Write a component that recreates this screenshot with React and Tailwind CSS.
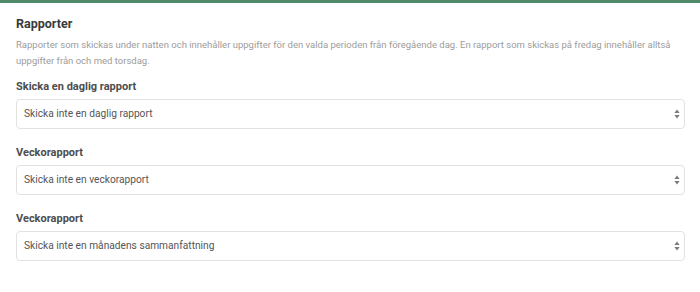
import React from "react";

function Arrows() {
  return (
    <svg width="6" height="10" viewBox="0 0 6 10" className="shrink-0">
      <path d="M3 0.5 L5.6 4 H0.4 Z" fill="#7a7a7a" />
      <path d="M3 9.5 L5.6 6 H0.4 Z" fill="#7a7a7a" />
    </svg>
  );
}

function Field({ label, value }) {
  return (
    <div className="flex flex-col">
      <div className="text-[11px] font-bold text-[#4d4d4d] leading-[14px] mb-[5px]">{label}</div>
      <div className="h-[30px] rounded-[4px] border border-[#e2e2e2] bg-white flex items-center justify-between pl-[7px] pr-[4px]">
        <span className="text-[10.2px] text-[#555]">{value}</span>
        <Arrows />
      </div>
    </div>
  );
}

export default function App() {
  return (
    <div className="w-[700px] h-[292px] bg-white overflow-hidden" style={{ fontFamily: "Roboto, 'Liberation Sans', sans-serif" }}>
      <div className="h-[3px] bg-[#4f8a6b]" />
      <div className="pl-[16px] pr-[15px] pt-[12px]">
        <h2 className="text-[12.5px] font-bold text-[#3a3a3a] leading-[18px]">Rapporter</h2>
        <p className="mt-[4px] text-[9.5px] text-[#9c9c9c] leading-[16px]">
          Rapporter som skickas under natten och innehåller uppgifter för den valda perioden från föregående dag. En rapport som skickas på fredag innehåller alltså uppgifter från och med torsdag.
        </p>
        <div className="mt-[11px] flex flex-col gap-[17px]">
          <Field label="Skicka en daglig rapport" value="Skicka inte en daglig rapport" />
          <Field label="Veckorapport" value="Skicka inte en veckorapport" />
          <Field label="Veckorapport" value="Skicka inte en månadens sammanfattning" />
        </div>
      </div>
    </div>
  );
}
